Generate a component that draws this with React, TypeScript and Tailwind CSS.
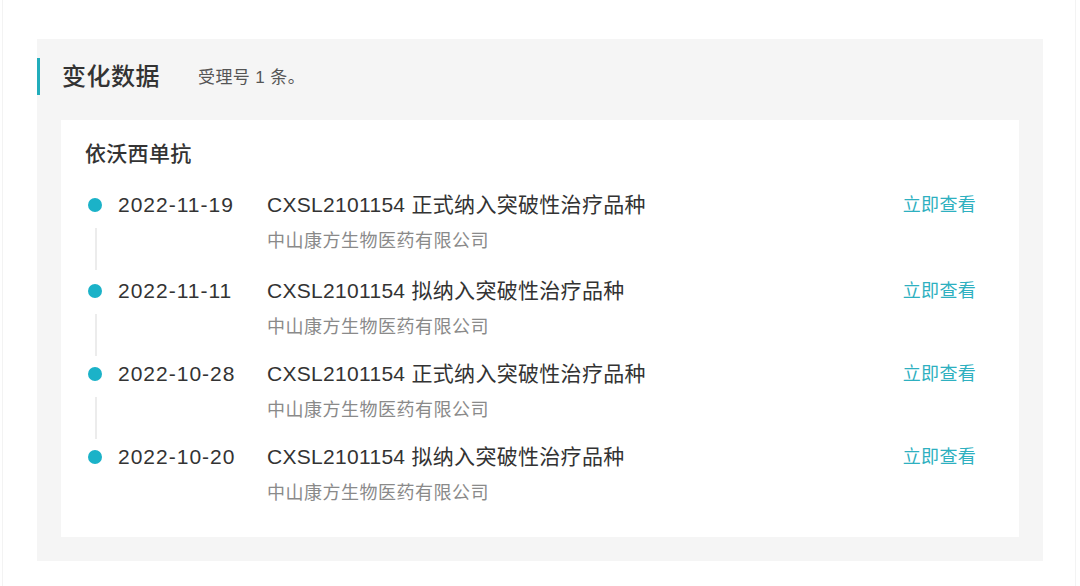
import React from 'react';

const records = [
  { date: '2022-11-19', title: 'CXSL2101154 正式纳入突破性治疗品种', gap: 'mt-0' },
  { date: '2022-11-11', title: 'CXSL2101154 拟纳入突破性治疗品种', gap: 'mt-[23px]' },
  { date: '2022-10-28', title: 'CXSL2101154 正式纳入突破性治疗品种', gap: 'mt-[20px]' },
  { date: '2022-10-20', title: 'CXSL2101154 拟纳入突破性治疗品种', gap: 'mt-[20px]' },
];

export default function App() {
  return (
    <div
      className="w-[1080px] h-[586px] bg-white flex"
      style={{ fontFamily: '"Liberation Sans", "Noto Sans CJK SC", sans-serif' }}
    >
      <div className="w-[3px] border-r border-[#f3f3f3]" />
      <div className="flex-1 pl-[34px] pt-[39px]">
        {/* 变化数据 panel */}
        <div className="w-[1006px] h-[522px] bg-[#f5f5f5] pt-[19px] px-[24px] pb-[24px]">
          <div className="-ml-[24px] flex items-center h-[37px]">
            <div className="w-[3px] h-[37px] bg-[#22adbb]" />
            <div className="ml-[22px] text-[24px] leading-[32px] font-medium tracking-[0.5px] text-[#333333]">变化数据</div>
            <div className="ml-[38px] mt-[3px] text-[17px] leading-[22px] tracking-[0.4px] text-[#555555]">受理号 1 条。</div>
          </div>

          <div className="mt-[25px] bg-white h-[417px] pt-[20px] pl-[24px] pr-[43px]">
            <div className="text-[21px] leading-[28px] font-medium tracking-[0.3px] text-[#333333]">依沃西单抗</div>
            <div className="mt-[22px]">
              {records.map((r, i) => (
                <div key={r.date} className={`flex ${r.gap}`}>
                  <div className="w-[33px] relative">
                    <div className="ml-[3px] mt-[8px] w-[14px] h-[14px] rounded-full bg-[#1bb2c8]" />
                    {i < records.length - 1 && (
                      <div className="absolute left-[10px] top-[38px] w-[2px] h-[42px] bg-[#ececec]" />
                    )}
                  </div>
                  <div className="w-[149px] text-[21px] leading-[30px] tracking-[1px] text-[#333333]">{r.date}</div>
                  <div className="flex-1">
                    <div className="text-[21px] leading-[30px] tracking-[0.3px] text-[#333333]">{r.title}</div>
                    <div className="mt-[9px] text-[18px] leading-[24px] tracking-[0.5px] text-[#8a8a8a]">中山康方生物医药有限公司</div>
                  </div>
                  <div className="text-[18px] leading-[30px] tracking-[0.3px] text-[#2eb0c0]">立即查看</div>
                </div>
              ))}
            </div>
          </div>
        </div>
      </div>
      <div className="w-[5px] border-l border-[#f3f3f3]" />
    </div>
  );
}
